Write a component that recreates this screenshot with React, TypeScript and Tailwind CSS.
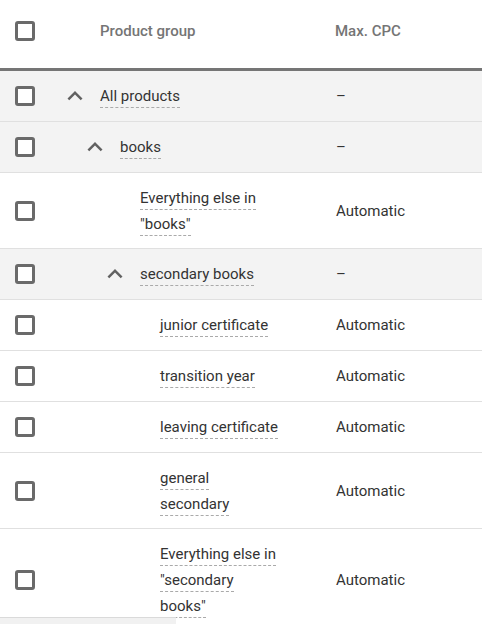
import type { ReactNode } from 'react';

type Row = {
  name: string;
  level: number;
  group?: boolean;
  cpc: string;
};

const rows: Row[] = [
  { name: 'All products', level: 0, group: true, cpc: '–' },
  { name: 'books', level: 1, group: true, cpc: '–' },
  { name: 'Everything else in "books"', level: 2, cpc: 'Automatic' },
  { name: 'secondary books', level: 2, group: true, cpc: '–' },
  { name: 'junior certificate', level: 3, cpc: 'Automatic' },
  { name: 'transition year', level: 3, cpc: 'Automatic' },
  { name: 'leaving certificate', level: 3, cpc: 'Automatic' },
  { name: 'general secondary', level: 3, cpc: 'Automatic' },
  { name: 'Everything else in "secondary books"', level: 3, cpc: 'Automatic' },
];

const indent = ['w-0', 'w-[20px]', 'w-[40px]', 'w-[60px]'];

function Checkbox() {
  return <div className="w-[20px] h-[20px] border-[3px] border-[#6a6a6a] rounded-[3px] bg-white" />;
}

function Chevron() {
  return (
    <svg width="30" height="30" viewBox="0 0 24 24" className="fill-[#616161] -my-[2px]">
      <path d="M12 8l-6 6 1.41 1.41L12 10.83l4.59 4.58L18 14z" />
    </svg>
  );
}

function Cell({ children, className = '' }: { children: ReactNode; className?: string }) {
  return <div className={`flex items-center ${className}`}>{children}</div>;
}

export default function App() {
  return (
    <div className="w-[482px] bg-white text-[15px] text-[#333333] font-['Roboto',sans-serif]">
      <div className="h-[71px] pb-[6px] flex items-center border-b-[3px] border-[#757575]">
        <Cell className="w-[50px] pl-[15px]">
          <Checkbox />
        </Cell>
        <div className="w-[285px] pl-[50px] font-medium text-[#757575]">Product group</div>
        <div className="font-medium text-[#757575]">Max. CPC</div>
      </div>

      {rows.map((row) => (
        <div
          key={row.name}
          className={`flex items-center min-h-[51px] py-[11.5px] leading-[26px] border-b border-[#e0e0e0] ${
            row.group ? 'bg-[#f3f3f3]' : 'bg-white'
          }`}
        >
          <Cell className="w-[50px] h-[26px] pl-[15px] shrink-0">
            <Checkbox />
          </Cell>
          <div className="w-[285px] shrink-0 flex items-center pr-[55px]">
            <div className={`shrink-0 ${indent[row.level]}`} />
            <div className="w-[50px] h-[26px] shrink-0 pl-[10px] flex items-center">{row.group && <Chevron />}</div>
            <div className="min-w-0">
              <span className="border-b border-dashed border-[#aaaaaa] pb-[2px]">{row.name}</span>
            </div>
          </div>
          <div className="pl-px">{row.cpc}</div>
        </div>
      ))}

      <div className="fixed bottom-0 left-0 h-[7px] w-[176px] bg-[#f1f1f1] border-t border-[#dadada]" />
    </div>
  );
}
